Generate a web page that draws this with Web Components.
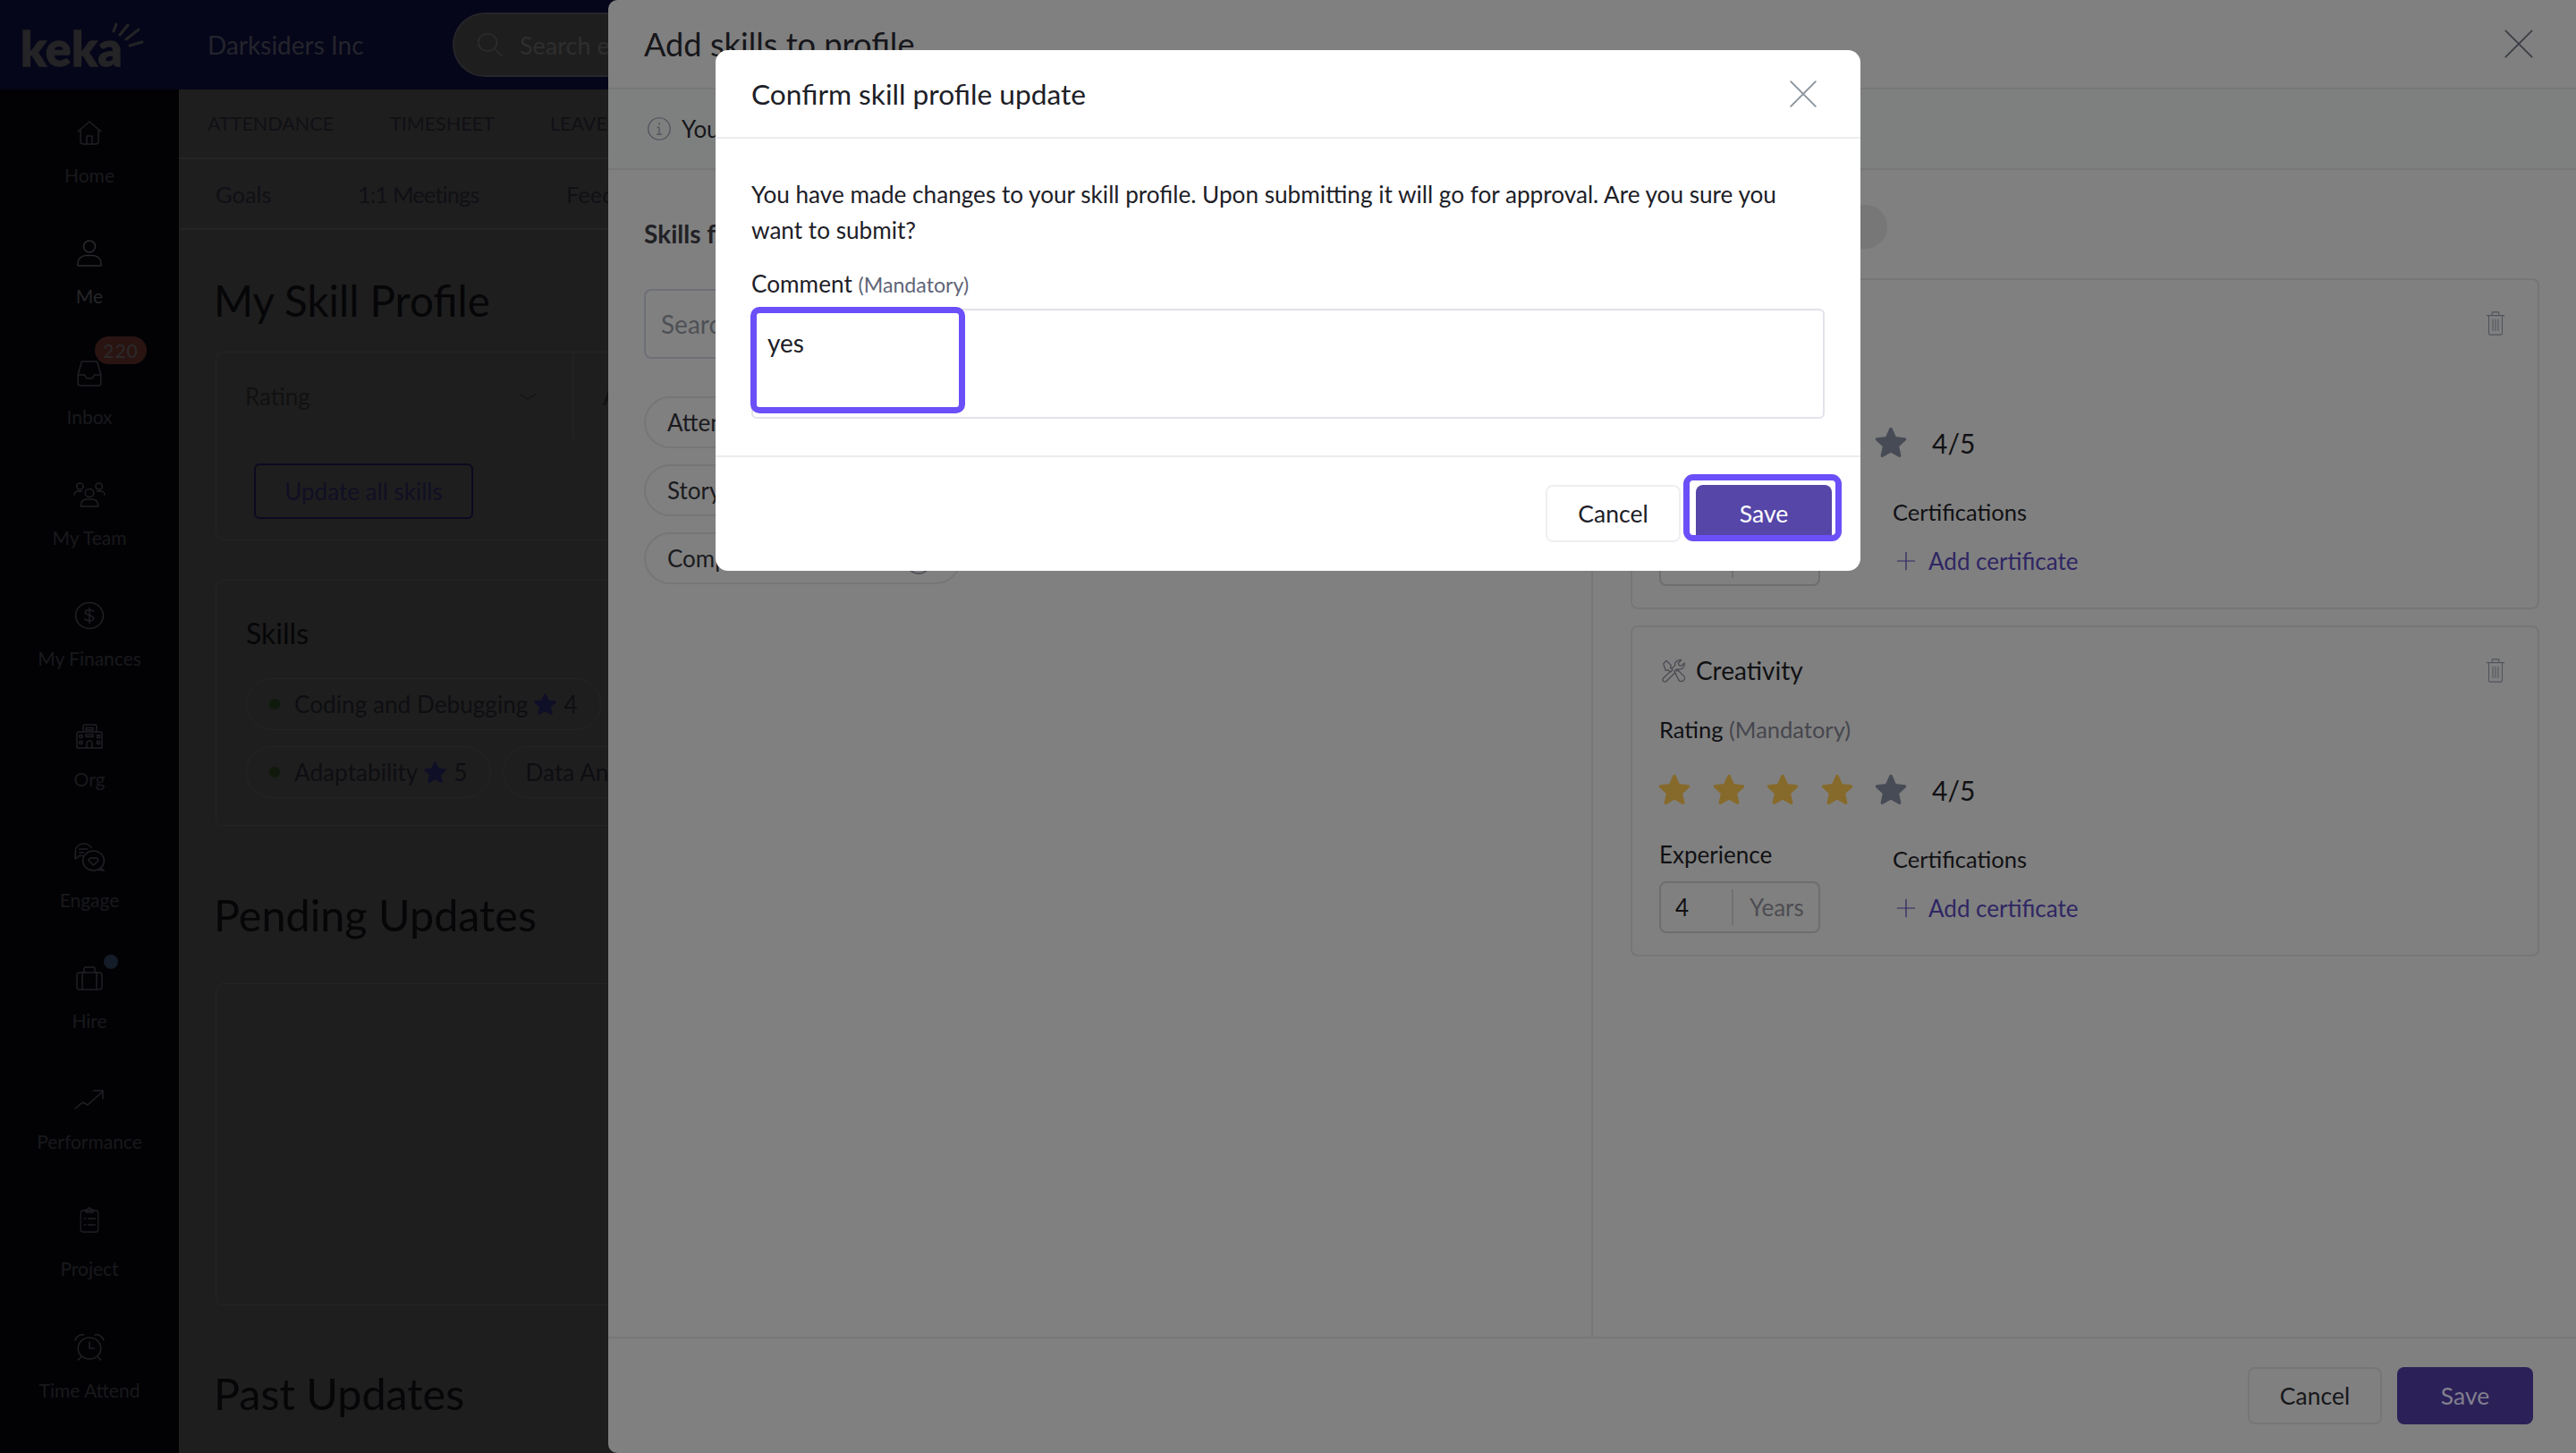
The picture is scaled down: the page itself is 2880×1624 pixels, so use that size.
<!DOCTYPE html>
<html lang="en"><head><meta charset="utf-8"><title>Keka</title>
<style>
html,body{margin:0;padding:0;background:#1e1e1e;}
body{font-family:Lato,"Open Sans",sans-serif;width:2880px;height:1624px;overflow:hidden;}
</style></head><body>
<app-shell></app-shell>
<script>
const ICONS={
home:'<path d="M3 15 16 4l13 11"/><path d="M6 13v13a3 3 0 0 0 3 3h14a3 3 0 0 0 3-3V13"/><path d="M13 29V20h6v9"/>',
me:'<circle cx="16" cy="8.500" r="6.500"/><path d="M3 30v-3a9.500 8.500 0 0 1 9.500-8.500h7A9.500 8.500 0 0 1 29 27v3z"/>',
inbox:'<path d="M8 2h16l4 14v11a2 2 0 0 1-2 2H6a2 2 0 0 1-2-2V16z"/><path d="M4 17h7l2 4h6l2-4h7"/>',
team:'<circle cx="16" cy="14" r="4.500"/><path d="M7 29v-2a6 6 0 0 1 6-6h6a6 6 0 0 1 6 6v2z"/><circle cx="6" cy="6.500" r="3.500"/><circle cx="26" cy="6.500" r="3.500"/><path d="M0 16a4 4 0 0 1 4-4h4M32 16a4 4 0 0 0-4-4h-4"/>',
finance:'<circle cx="16" cy="16" r="14.500"/><path d="M20.500 11.500c-1-2.500-8.500-2.500-9 .5-.5 3.500 9.500 3.500 9 7.500-.5 3-8 2.800-9.300 .2M16 7.500v17"/>',
org:'<path d="M9 11V5a2 2 0 0 1 2-2h11a2 2 0 0 1 2 2v6"/><path d="M4 11h24a2 2 0 0 1 2 2v16H2V13a2 2 0 0 1 2-2z"/><path d="M13 29v-5a3 3 0 0 1 6 0v5"/><rect x="12" y="6.500" width="8" height="2.500"/><rect x="12" y="14" width="8" height="2.500"/><rect x="5" y="14.500" width="3" height="3"/><rect x="5" y="21.500" width="3" height="3"/><rect x="24.500" y="14.500" width="3" height="3"/><rect x="24.500" y="21.500" width="3" height="3"/>',
engage:'<path d="M18 5.500A8.500 8.500 0 0 0 2 9.500V18l4-3.500h3"/><path d="M6 7h8M6 11h4"/><ellipse cx="20" cy="20" rx="10.500" ry="11"/><path d="M27 28l3.500 3-6-.800"/><path d="M20 25l-4.200-4.200a2.700 2.700 0 0 1 4.200-3.300 2.700 2.700 0 0 1 4.200 3.300z"/>',
hire:'<rect x="2" y="10" width="28" height="19" rx="3"/><path d="M10 10V6a2 2 0 0 1 2-2h8a2 2 0 0 1 2 2v4M8 10v19M24 10v19"/>',
perf:'<path d="M1 27l8-7 5 3L30 8"/><path d="M20 7h10v9"/>',
project:'<rect x="4" y="6" width="24" height="24" rx="3"/><path d="M11 6V5h3a2 2 0 0 1 4 0h3v3H11zM9 15h2M14 15h10M9 22h2M14 22h10"/>',
clock:'<circle cx="16" cy="17" r="12"/><path d="M16 10v7h5M1 8c1-4 5-7 9-6M31 8c-1-4-5-7-9-6M7 27l-3 3M25 27l3 3"/>',
search:'<circle cx="13" cy="13" r="11"/><path d="M21 21l9 9"/>',
chev:'<path d="M5 11l11 11 11-11"/>',
x:'<path d="M3 3l26 26M29 3 3 29"/>',
plus:'<path d="M16 2v28M2 16h28"/>',
trash:'<path d="M3 7h26M11 7V3h10v4M6 7v21a2 2 0 0 0 2 2h16a2 2 0 0 0 2-2V7M12 12v13M16 12v13M20 12v13"/>',
tools:'<path d="M3 7l4-4 6 6-1 3 3 3-3 3-3-3-3 1z"/><path d="M17 17l3-3 9 9a2.100 2.100 0 0 1-6 6z"/><path d="M12 17 3 26a2.800 2.800 0 0 0 4 4l11-11M14 13l4-4c-1-4 3-8 8-7l-4 4 1 3 3 1 4-4c1 5-3 9-7 8l-3 3"/>',
info:'<circle cx="16" cy="16" r="14"/><path d="M16 8.500v2M13.500 14H16v9M13 23h6"/>',
star:'<path fill="currentColor" stroke="currentColor" stroke-width="3" stroke-linejoin="round" d="M16 3l3.800 8.600 9.200 1-6.900 6.200 2 9.200L16 23.300 7.900 28l2-9.200L3 12.600l9.200-1z"/>'
};
function def(name,css,html){
  customElements.define(name,class extends HTMLElement{
    connectedCallback(){
      if(this.shadowRoot)return;
      const r=this.attachShadow({mode:'open'});
      r.innerHTML='<style>'+css+'</style>'+(typeof html==='function'?html(this):html);
    }
  });
}
def('ui-icon',':host{display:inline-flex;flex:none;line-height:0}svg{width:100%;height:100%;overflow:visible}',
 h=>`<svg viewBox="0 0 32 32" fill="none" stroke="currentColor" stroke-width="${h.getAttribute('sw')||1.5}" stroke-linecap="round" stroke-linejoin="round" preserveAspectRatio="none">${ICONS[h.getAttribute('name')]}</svg>`);

def('nav-item',`:host{display:flex;flex-direction:column;align-items:center;height:135px;color:#19191c;position:relative}
 .ic{height:46px;display:flex;align-items:center;justify-content:center;color:#202024}
 ui-icon{width:var(--w,32px);height:var(--h,32px)}
 .l{margin-top:13px;line-height:24px;font-size:21px;white-space:nowrap}
 :host([tall]){height:143px}:host([tall]) .l{margin-top:20px}
 :host([on]) .l{color:#262629}:host([on]) .ic{color:#2a2a2e}
 .badge{position:absolute;left:106px;top:-19px;width:58px;height:31px;border-radius:16px;background:#2a1412;color:#2a2a2a;font-size:21px;line-height:31px;text-align:center;letter-spacing:1px}
 .dot{position:absolute;left:116px;top:-3px;width:16px;height:16px;border-radius:50%;background:#141c28}`,
 h=>`<div class="ic"><ui-icon name="${h.getAttribute('icon')}" style="--w:${h.getAttribute('w')||32}px"></ui-icon></div><div class="l"><slot></slot></div>${h.hasAttribute('badge')?`<div class="badge">${h.getAttribute('badge')}</div>`:''}${h.hasAttribute('dot')?'<div class="dot"></div>':''}`);

def('side-nav',':host{display:block;background:#020205;grid-row:2;padding-top:25px;box-sizing:border-box}',`<nav-item icon="home">Home</nav-item><nav-item icon="me" on>Me</nav-item><nav-item icon="inbox" w="34" badge="220">Inbox</nav-item><nav-item icon="team" w="34">My Team</nav-item><nav-item icon="finance" w="34">My Finances</nav-item><nav-item icon="org">Org</nav-item><nav-item icon="engage" w="36">Engage</nav-item><nav-item icon="hire" dot>Hire</nav-item><nav-item icon="perf" w="34">Performance</nav-item><nav-item icon="project" w="26" tall>Project</nav-item><nav-item icon="clock" w="34">Time Attend</nav-item>`);

def('top-bar',`:host{display:flex;align-items:center;grid-column:1 / 3;height:100px;background:#06061a;color:#24242c;overflow:hidden}
 .brand{width:200px;flex:none;position:relative;height:100px;display:flex;align-items:center;padding-left:23px;box-sizing:border-box}
 .keka{font-size:53px;font-weight:900;color:#242426;-webkit-text-stroke:1.500px #242426;letter-spacing:.5px;line-height:1;margin-top:6px}
 svg{position:absolute;left:124px;top:24px;width:38px;height:30px}
 .co{font-size:28px;width:306px;flex:none;padding-left:32px;box-sizing:border-box}
 .search{width:400px;height:72px;flex:none;box-sizing:border-box;border:2px solid #25252a;border-right:0;border-radius:36px;background:#1e1e1e;display:flex;align-items:center;padding-left:25px;gap:18px;color:#2e2e2e;font-size:27px;white-space:nowrap}
 ui-icon{width:30px;height:28px;color:#2e2e2e}`,
 `<div class="brand"><span class="keka">keka</span><svg viewBox="0 0 38 30" fill="none" stroke="#242426" stroke-width="3" stroke-linecap="round"><path d="M3 11 6 3M10 15l9-11M17 20 31 9M21 27l14-4"/></svg></div><div class="co">Darksiders Inc</div><div class="search"><ui-icon name="search" sw="1.500"></ui-icon><span>Search employees</span></div>`);

def('skill-chip',`:host{display:inline-flex;align-items:center;height:58px;box-sizing:border-box;border:1.500px solid #242424;border-radius:29px;padding:0 25px;font-size:26.200px;color:#0e0e12;white-space:nowrap;flex:none}
 i{width:12px;height:12px;border-radius:50%;background:#0f1a0c;margin-right:16px}
 ui-icon{width:27px;height:27px;color:#0f0f28;margin:0 7px 0 6px}`,
 h=>`${h.hasAttribute('nodot')?'':'<i></i>'}<slot></slot><ui-icon name="star"></ui-icon>${h.getAttribute('n')}`);

def('skill-page',`:host{display:block;background:#1e1e1e;color:#060608;position:relative;overflow:hidden}
 .tabs{height:78px;box-sizing:border-box;padding-left:32px;display:flex;align-items:center;border-bottom:2px solid #242424;font-size:21.500px;color:#101015;white-space:nowrap}
 .tabs span:nth-child(1){width:204px}.tabs span:nth-child(2){width:179px}
 .sub{height:79px;box-sizing:border-box;padding-left:41px;display:flex;align-items:center;border-bottom:2px solid #242424;font-size:25.500px;color:#101015;white-space:nowrap}
 .sub span:nth-child(1){width:159px}.sub span:nth-child(2){width:233px;letter-spacing:-.9px}
 .wrap{padding:0 0 0 41px;width:1000px}
 h1{font-weight:400;font-size:47.500px;line-height:60px;margin:49px 0 0 -2px}
 h2{font-weight:400;font-size:48.500px;line-height:60px;margin:0 0 0 -2px}
 .card{border:1.500px solid #242424;border-radius:8px;box-sizing:border-box}
 .filter{margin-top:27px;height:211px;padding:0}
 .frow{height:97px;display:flex;font-size:26px;color:#111}
 .fcell{width:399px;border-right:1.500px solid #242424;display:flex;align-items:center;justify-content:space-between;box-sizing:border-box;padding:0 37px 0 32px}
 .fcell ui-icon{width:26px;height:16px;color:#111}
 .fcell2{padding-left:33px;display:flex;align-items:center}
 .btn{margin:27px 0 0 42px;width:245px;height:62px;border:2px solid #0b0a20;border-radius:6px;box-sizing:border-box;display:flex;align-items:center;justify-content:center;font-size:26px;color:#110f24}
 .skills{margin-top:44px;height:275px;padding:41px 33px 0}
 .st{font-size:32px;line-height:36px}
 .crow{display:flex;gap:13px;margin-top:32px}.crow+.crow{margin-top:18px}
 .pending{height:360px;margin-top:47px}
 h2.h{margin-top:69px}h2.h3{margin-top:68px}`,
 `<div class="tabs"><span>ATTENDANCE</span><span>TIMESHEET</span><span>LEAVE</span></div>
 <div class="sub"><span>Goals</span><span>1:1 Meetings</span><span>Feedback</span></div>
 <div class="wrap"><h1>My Skill Profile</h1>
 <div class="card filter"><div class="frow"><div class="fcell"><span>Rating</span><ui-icon name="chev"></ui-icon></div><div class="fcell2">All</div></div><div class="btn">Update all skills</div></div>
 <div class="card skills"><div class="st">Skills</div>
 <div class="crow"><skill-chip n="4">Coding and Debugging</skill-chip></div>
 <div class="crow"><skill-chip n="5">Adaptability</skill-chip><skill-chip n="4" nodot>Data Analysis</skill-chip></div></div>
 <h2 class="h">Pending Updates</h2><div class="card pending"></div>
 <h2 class="h3">Past Updates</h2></div>`);

def('skill-card',`:host{display:block;height:370px;box-sizing:border-box;border:2px solid #767676;border-radius:8px;padding:0 30px;position:relative;color:#111114}
 .t{display:flex;align-items:center;height:32px;margin-top:32px;font-size:28px;justify-content:space-between}
 .tl{display:flex;align-items:center;gap:11px;padding-left:2px}
 .tl ui-icon{width:28px;height:27px;color:#4a4a52}
 .tr{width:24px;height:30px;color:#50535c;margin-right:5px}
 .r{margin-top:34px;font-size:25.500px;line-height:32px}.r em{font-style:normal;color:#46464e}
 .stars{display:flex;align-items:center;margin-top:35px;height:34px;margin-left:-2px}
 .stars ui-icon{width:38px;height:38px;margin-right:22.500px;color:#866a2b}
 .stars ui-icon.off{color:#474b56;margin-right:27px}
 .sc{font-size:30px}
 .g{display:grid;grid-template-columns:261px 1fr;margin-top:39px}
 .lb{font-size:25.500px;line-height:32px}.ex{font-size:26px}
 .lb2{margin-top:5px}
 .inp{width:180px;height:58px;box-sizing:border-box;border:2px solid #6e6e6e;border-radius:8px;margin-top:14px;display:flex;align-items:center;padding-left:16px;font-size:26px}
 .inp b{width:2px;height:40px;background:#707070;margin-left:48px;flex:none}
 .inp span{margin-left:18px;color:#4d4d52;font-size:26px}
 .add{display:flex;align-items:center;gap:14px;color:#2f2663;font-size:26px;margin-top:23px;height:32px;padding-left:4px}
 .add ui-icon{width:22px;height:22px}`,
 h=>`<div class="t"><div class="tl"><ui-icon name="tools" sw="1.500"></ui-icon><span>${h.getAttribute('title')}</span></div><ui-icon class="tr" name="trash" sw="1.400"></ui-icon></div>
 <div class="r">Rating <em>(Mandatory)</em></div>
 <div class="stars"><ui-icon name="star"></ui-icon><ui-icon name="star"></ui-icon><ui-icon name="star"></ui-icon><ui-icon name="star"></ui-icon><ui-icon class="off" name="star"></ui-icon><span class="sc">4/5</span></div>
 <div class="g"><div><div class="lb ex">Experience</div><div class="inp">${h.getAttribute('years')}<b></b><span>Years</span></div></div>
 <div class="lb2"><div class="lb">Certifications</div><div class="add"><ui-icon name="plus" sw="1.800"></ui-icon>Add certificate</div></div></div>`);

def('pick-pill',`:host{display:flex;align-items:center;width:355px;height:58px;box-sizing:border-box;border:2px solid #767676;border-radius:29px;padding-left:24px;font-size:26px;color:#1a1a1e;white-space:nowrap;position:relative}
 i{position:absolute;right:32px;top:17px;width:28px;height:28px;border-radius:50%;border:2px solid #55555c;box-sizing:border-box}`,`<slot></slot><i></i>`);

def('slide-panel',`:host{position:absolute;left:680px;top:0;width:2200px;height:1624px;background:#808080;border-radius:10px 0 0 10px;display:flex;flex-direction:column;color:#16161a}
 header{height:100px;box-sizing:border-box;border-bottom:2px solid #777;display:flex;align-items:center;justify-content:space-between;padding:0 46px 0 40px;flex:none;font-size:36.200px}
 header ui-icon{width:36px;height:36px;color:#3b3d45}
 .band{height:90px;box-sizing:border-box;border-bottom:2px solid #777;background:#7e807f;display:flex;align-items:center;gap:11px;padding-left:43px;font-size:26px;flex:none}
 .band ui-icon{width:28px;height:28px;color:#4e505a}
 .body{flex:1;display:flex;min-height:0}
 .l{width:1101px;box-sizing:border-box;border-right:2px solid #777;padding:51px 0 0 40px}
 .h{font-size:28px;font-weight:700;line-height:40px;color:#212125}
 .s{width:600px;height:78px;margin-top:42px;box-sizing:border-box;border:2px solid #6d6f78;border-radius:8px;display:flex;align-items:center;padding-left:17px;color:#4e5056;font-size:28px}
 .ps{display:flex;flex-direction:column;gap:18px;margin-top:42px}
 .r{flex:1;padding:39px 41px 0 42px;box-sizing:border-box}
 .tag{width:287px;height:49px;border-radius:25px;background:#777;margin-bottom:33px}
 skill-card+skill-card{margin-top:18px}
 footer{height:130px;box-sizing:border-box;border-top:2px solid #777;display:flex;justify-content:flex-end;gap:17px;padding:32px 48px 0 0;flex:none}
 .b{width:152px;height:64px;box-sizing:border-box;border-radius:8px;display:flex;align-items:center;justify-content:center;font-size:26.500px}
 .c{width:150px;border:2px solid #767676}.v{background:#2b2158;color:#827f8f}`,
 `<header><span>Add skills to profile</span><ui-icon name="x" sw="1.600"></ui-icon></header>
 <div class="band"><ui-icon name="info" sw="1.400"></ui-icon><span>You can add skills here</span></div>
 <div class="body"><div class="l"><div class="h">Skills for your role</div><div class="s">Search</div><div class="ps"><pick-pill>Attendance</pick-pill><pick-pill>Storytelling</pick-pill><pick-pill>Compliance</pick-pill></div></div>
 <div class="r"><div class="tag"></div><skill-card title="Data Analysis" years="3"></skill-card><skill-card title="Creativity" years="4"></skill-card></div></div>
 <footer><div class="b c">Cancel</div><div class="b v">Save</div></footer>`);

def('confirm-dialog',`:host{position:absolute;left:800px;top:56px;width:1280px;height:582px;background:#fff;border-radius:14px;display:flex;flex-direction:column;color:#1d2027}
 header{height:99px;box-sizing:border-box;border-bottom:2px solid #ebecef;padding:0 47px 0 40px;display:flex;align-items:center;justify-content:space-between;font-size:31.700px;flex:none}
 header ui-icon{width:34px;height:34px;color:#8a939c}
 .m{padding:42px 40px 42px;flex:none;height:354px;box-sizing:border-box}
 p{margin:0;font-size:26.150px;line-height:40px}
 .lb{margin-top:20px;line-height:40px;font-size:26.200px}.lb em{font-style:normal;color:#5f6578;font-size:23.200px}
 .ta{margin-top:7px;height:123px;box-sizing:border-box;border:2px solid #e2e2ea;border-radius:6px;position:relative;padding:16px 16px;font-size:28px;line-height:40px}
 .ta i{position:absolute;left:-3px;top:-4px;width:240px;height:119px;box-sizing:border-box;border:7px solid #6b4ff8;border-radius:10px}
 footer{flex:1;border-top:2px solid #ebecef;display:flex;justify-content:flex-end;gap:17px;padding:31px 32px 0 0}
 .b{width:151px;height:64px;box-sizing:border-box;border-radius:8px;display:flex;align-items:center;justify-content:center;font-size:26.500px;position:relative}
 .c{border:2px solid #eeeff2}
 .v{width:152px;background:#5546a8;color:#fff;height:63px;border-radius:8px 8px 0 0}
 .v i{position:absolute;left:-14px;top:-12px;width:177px;height:75px;box-sizing:border-box;border:7px solid #6b4ff8;border-radius:11px}`,
 `<header><span>Confirm skill profile update</span><ui-icon name="x" sw="1.800"></ui-icon></header>
 <div class="m"><p>You have made changes to your skill profile. Upon submitting it will go for approval. Are you sure you want to submit?</p>
 <div class="lb">Comment <em>(Mandatory)</em></div>
 <div class="ta">yes<i></i></div></div>
 <footer><div class="b c">Cancel</div><div class="b v">Save<i></i></div></footer>`);

def('app-shell',`:host{display:grid;grid-template-columns:200px 2680px;grid-template-rows:100px 1524px;width:2880px;height:1624px;position:relative;overflow:hidden}`,
 `<top-bar></top-bar><side-nav></side-nav><skill-page></skill-page><slide-panel></slide-panel><confirm-dialog></confirm-dialog>`);
</script>
</body></html>
